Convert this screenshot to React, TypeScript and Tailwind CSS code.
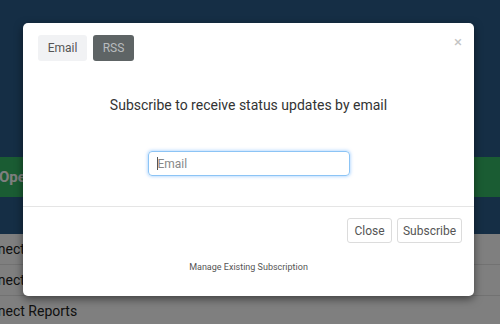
const rows = ["Connect Website", "Connect API", "Connect Reports"];

export default function App() {
  return (
    <div
      className="relative h-[324px] w-[500px] overflow-hidden bg-white"
      style={{ fontFamily: "Roboto, 'Liberation Sans', sans-serif" }}
    >
      {/* page behind the dialog */}
      <div className="flex flex-col">
        <div className="h-[157px] bg-[#2a5c8a]" />
        <div className="flex h-[40px] items-center bg-[#35b866]">
          <span className="ml-[-1px] text-[15px] font-bold text-white">Operational</span>
        </div>
        <div className="h-[37px] bg-[#2a5c8a]" />
        {rows.map((row) => (
          <div
            key={row}
            className="flex h-[31px] items-center border-b border-[#e4e4e4] bg-white"
          >
            <span className="ml-[-27px] text-[14px] text-[#222]">{row}</span>
          </div>
        ))}
      </div>

      {/* backdrop + dialog */}
      <div className="absolute inset-0 flex bg-black/50 pl-[23px] pt-[23px]">
        <div className="relative h-[273px] w-[451px] rounded-[5px] bg-white shadow-[0_3px_9px_rgba(0,0,0,0.5)]">
          <button className="absolute right-[12px] top-[12px] text-[15px] leading-none text-[#c4c4c4]">
            ×
          </button>

          <div className="flex gap-[6px] px-[15px] pt-[12px]">
            <button className="h-[26px] w-[49px] rounded-[3px] bg-[#f1f2f4] text-[12px] text-[#555]">
              Email
            </button>
            <button className="h-[26px] w-[41px] rounded-[3px] bg-[#5e6465] text-[12px] text-[#b8bcbe]">
              RSS
            </button>
          </div>

          <h2 className="mt-[32px] text-center text-[14px] font-normal leading-[24px] text-[#333]">
            Subscribe to receive status updates by email
          </h2>

          <div className="mt-[34px] flex justify-center">
            <div className="flex h-[25px] w-[202px] items-center rounded-[4px] border border-[#8cc4f5] px-[8px] shadow-[0_0_3px_1px_rgba(128,189,255,0.5)]">
              <span className="h-[13px] w-px bg-[#555]" />
              <span className="text-[12px] text-[#888]">Email</span>
            </div>
          </div>

          <div className="mt-[30px] border-t border-[#e5e5e5]" />

          <div className="flex justify-end gap-[5px] pr-[12px] pt-[11px]">
            <button className="h-[25px] w-[45px] rounded-[3px] border border-[#dcdcdc] text-[12px] text-[#555]">
              Close
            </button>
            <button className="h-[25px] w-[65px] rounded-[3px] border border-[#dcdcdc] text-[12px] text-[#555]">
              Subscribe
            </button>
          </div>

          <p className="mt-[17px] text-center text-[9px] leading-[14px] text-[#555]">
            Manage Existing Subscription
          </p>
        </div>
      </div>
    </div>
  );
}
